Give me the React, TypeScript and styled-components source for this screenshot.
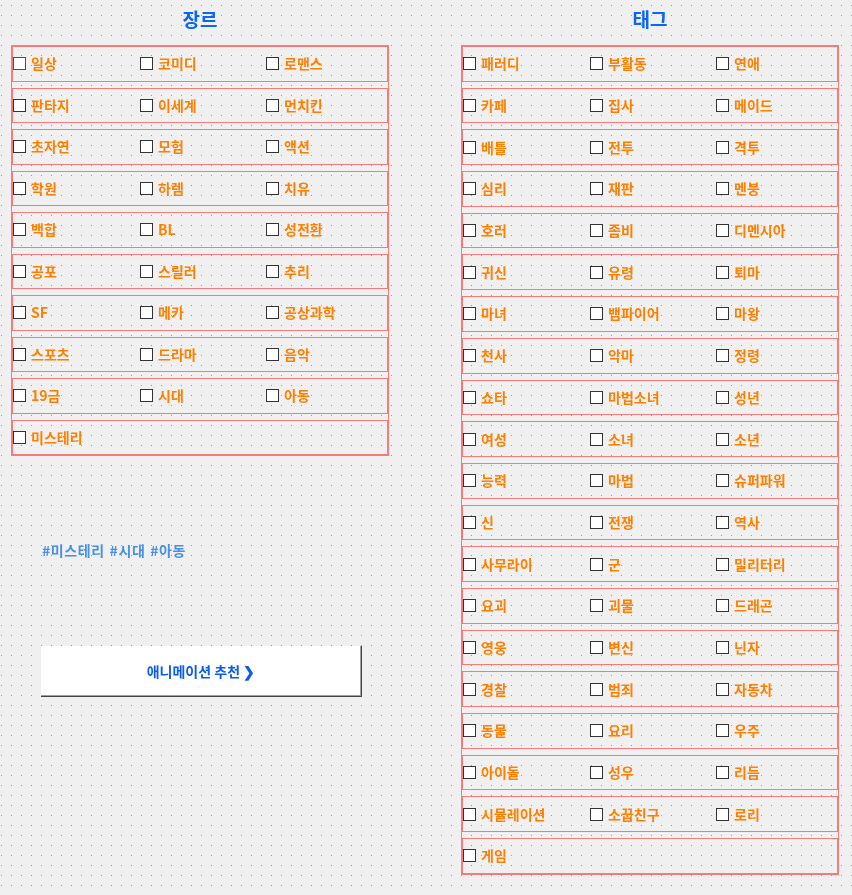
import styled, { createGlobalStyle } from 'styled-components'

const genres: string[] = [
  '일상', '코미디', '로맨스',
  '판타지', '이세계', '먼치킨',
  '초자연', '모험', '액션',
  '학원', '하렘', '치유',
  '백합', 'BL', '성전환',
  '공포', '스릴러', '추리',
  'SF', '메카', '공상과학',
  '스포츠', '드라마', '음악',
  '19금', '시대', '아동',
  '미스테리',
]

const tags: string[] = [
  '패러디', '부활동', '연애',
  '카페', '집사', '메이드',
  '배틀', '전투', '격투',
  '심리', '재판', '멘붕',
  '호러', '좀비', '디멘시아',
  '귀신', '유령', '퇴마',
  '마녀', '뱀파이어', '마왕',
  '천사', '악마', '정령',
  '쇼타', '마법소녀', '성년',
  '여성', '소녀', '소년',
  '능력', '마법', '슈퍼파워',
  '신', '전쟁', '역사',
  '사무라이', '군', '밀리터리',
  '요괴', '괴물', '드래곤',
  '영웅', '변신', '닌자',
  '경찰', '범죄', '자동차',
  '동물', '요리', '우주',
  '아이돌', '성우', '리듬',
  '시뮬레이션', '소꿉친구', '로리',
  '게임',
]

const chunk = (items: string[]) => {
  const rows: string[][] = []
  for (let i = 0; i < items.length; i += 3) rows.push(items.slice(i, i + 3))
  return rows
}

const CheckList = ({ items, rowHeight, focusFirst }: { items: string[]; rowHeight: number; focusFirst?: boolean }) => (
  <Box>
    {chunk(items).map((row, r) => (
      <Row key={r} $h={rowHeight}>
        {row.map((label, c) => (
          <Item key={label}>
            <Check type="checkbox" $focused={!!focusFirst && r === 0 && c === 0} />
            <Label>{label}</Label>
          </Item>
        ))}
      </Row>
    ))}
  </Box>
)

export default function App() {
  return (
    <>
      <GlobalStyle />
      <Page>
        <Column>
          <Title>장르</Title>
          <CheckList items={genres} rowHeight={35.5} focusFirst />
          <Hashtags>#미스테리 #시대 #아동</Hashtags>
          <RecommendButton type="button">애니메이션 추천 ❯</RecommendButton>
        </Column>
        <Column>
          <Title>태그</Title>
          <CheckList items={tags} rowHeight={35.7} />
        </Column>
      </Page>
    </>
  )
}

const GlobalStyle = createGlobalStyle`
  html {
    background-color: #f0f0f0;
  }

  body {
    margin: 0;
    padding: 0;
    font-family: "Noto Sans CJK KR", "Noto Sans", sans-serif;
    min-height: 895px;
  }

  body::before {
    content: "";
    position: fixed;
    inset: 0;
    z-index: -1;
    background-image: linear-gradient(to right, #9a9a9a 1px, transparent 1px);
    background-size: 10px 10px;
    background-position: 1px 5px;
    -webkit-mask-image: linear-gradient(to bottom, #000 1px, transparent 1px);
    -webkit-mask-size: 10px 10px;
    -webkit-mask-position: 1px 5px;
    mask-image: linear-gradient(to bottom, #000 1px, transparent 1px);
    mask-size: 10px 10px;
    mask-position: 1px 5px;
  }
`

const Page = styled.div`
  display: flex;
  align-items: flex-start;
  gap: 72px;
  padding-left: 11px;
`

const Column = styled.div`
  display: flex;
  flex-direction: column;
  width: 378px;
`

const Title = styled.h2`
  margin: 0;
  height: 45px;
  padding-bottom: 9px;
  box-sizing: border-box;
  display: flex;
  align-items: center;
  justify-content: center;
  font-size: 19px;
  font-weight: 700;
  color: #0a66f5;
`

const Box = styled.div`
  display: flex;
  flex-direction: column;
  gap: 6px;
  border: 1px solid #f77a7a;
`

const Row = styled.div<{ $h: number }>`
  display: grid;
  grid-template-columns: 127px 126px 1fr;
  align-items: center;
  box-sizing: border-box;
  height: ${p => p.$h}px;
  border: 1px solid #f77a7a;
`

const Item = styled.label`
  display: flex;
  align-items: center;
  gap: 5px;
  font-size: 14px;
  font-weight: 700;
  color: #ff8000;
  white-space: nowrap;
`

const Label = styled.span`
  line-height: 14px;
  padding-bottom: 1px;
`

const Check = styled.input<{ $focused: boolean }>`
  appearance: none;
  margin: 0;
  width: 13px;
  height: 13px;
  box-sizing: border-box;
  background: #fff;
  border: 1px solid ${p => (p.$focused ? '#1f5a96' : '#333')};
`

const Hashtags = styled.div`
  margin-top: 84px;
  padding-left: 31px;
  line-height: 20px;
  font-size: 14px;
  font-weight: 700;
  letter-spacing: 0.6px;
  word-spacing: 1px;
  color: #4a8fe6;
`

const RecommendButton = styled.button`
  margin-top: 86px;
  margin-left: 30px;
  width: 321px;
  height: 51px;
  box-sizing: border-box;
  background: #fff;
  border: none;
  border-right: 1px solid #444;
  border-bottom: 1px solid #444;
  box-shadow: inset -1px -1px #a0a0a0;
  font-family: inherit;
  font-size: 14px;
  font-weight: 700;
  color: #0a5cf0;
  cursor: pointer;
`
